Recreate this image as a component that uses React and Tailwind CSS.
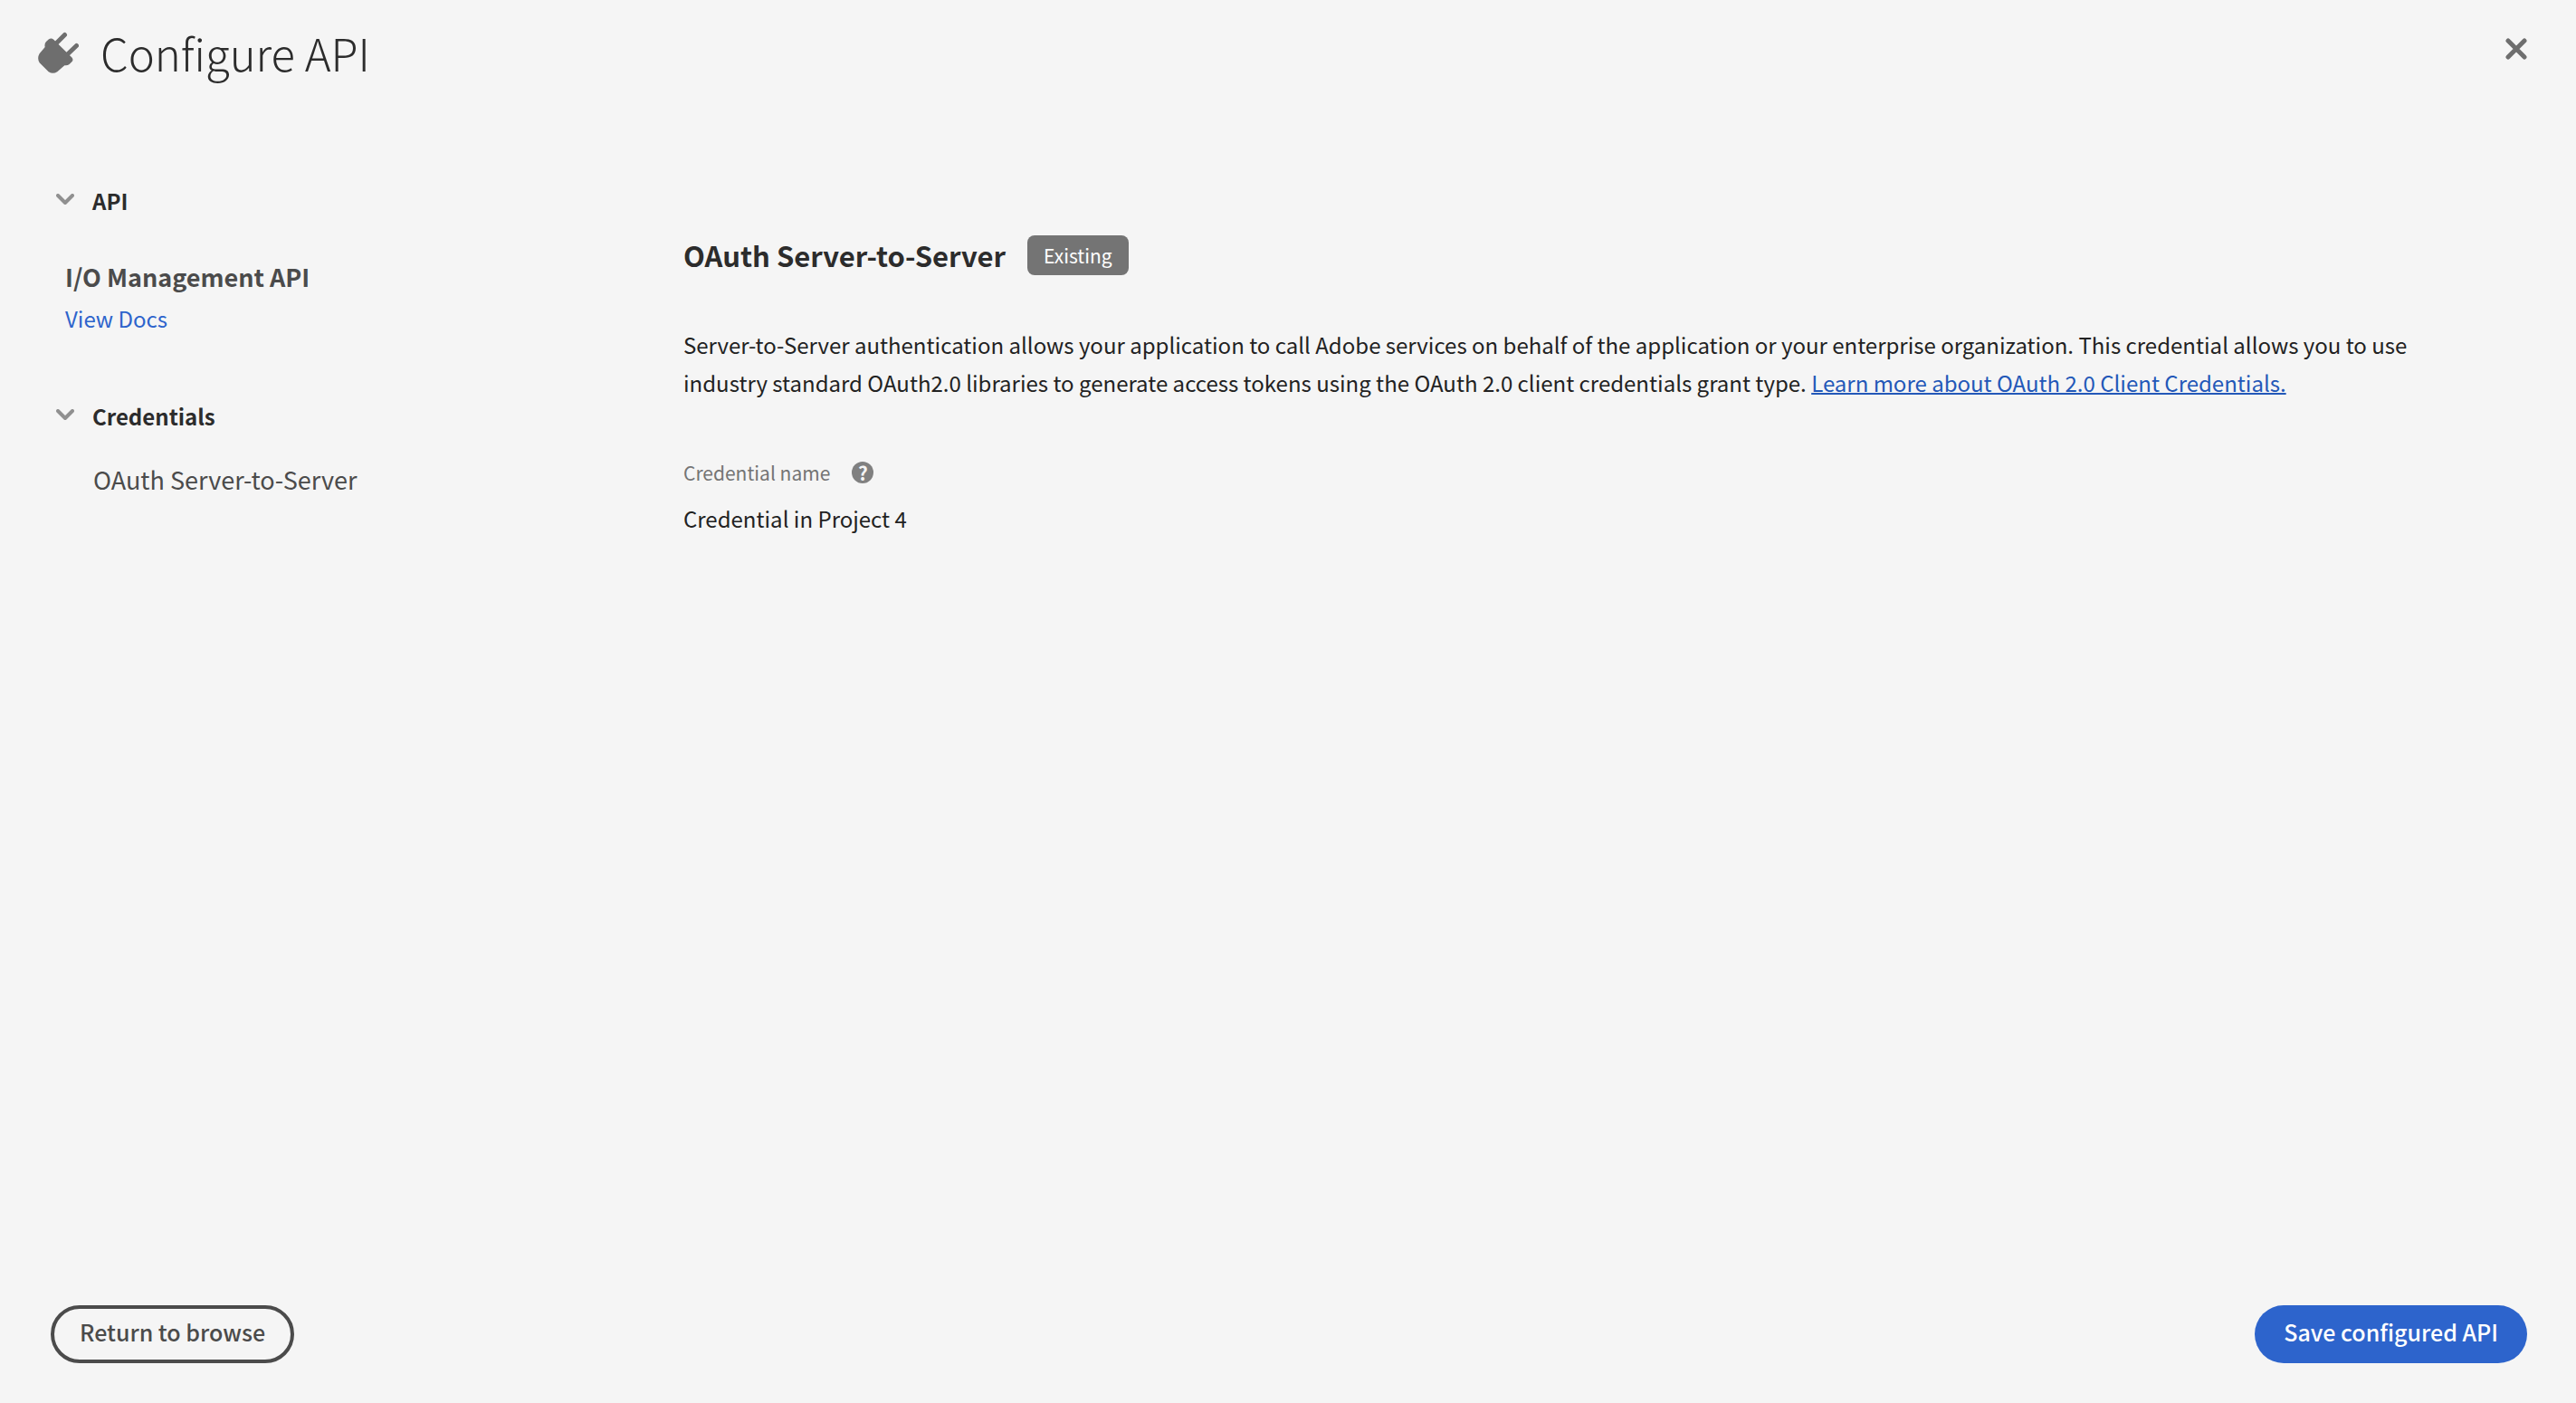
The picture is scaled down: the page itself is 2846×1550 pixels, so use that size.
import React from "react";

function PlugIcon() {
  return (
    <svg viewBox="0 0 46 46" className="size-[46px] shrink-0 text-[#6e6e6e]" fill="currentColor" aria-hidden="true">
      <path d="M21 13 30.500 3.500M32.500 26 43.500 15.500" fill="none" stroke="currentColor" strokeWidth="5" strokeLinecap="round" />
      <path d="M8.700 17Q7.800 13.200 10 11L12.700 8.500Q15.500 6.200 18.300 8.700L38.400 28.400Q40.500 31 38.400 33.300L35.600 36Q33.300 37.800 30.300 37.200L22.300 44.200Q17.400 47.300 12.600 44.200L2.600 34.200Q-.3 29.300 2.600 24.200Z" />
    </svg>
  );
}

function Chevron() {
  return (
    <svg viewBox="0 0 20 16" className="h-4 w-5" fill="none" stroke="#909090" strokeWidth="4" strokeLinecap="round" strokeLinejoin="round" aria-hidden="true">
      <path d="M2 2l8 8 8-8" />
    </svg>
  );
}

function Section({ title, children }) {
  return (
    <section>
      <button type="button" className="flex items-center gap-5 text-[24px] leading-10 font-bold text-[#2c2c2c]">
        <Chevron />
        {title}
      </button>
      {children}
    </section>
  );
}

export default function App() {
  return (
    <div className="flex min-h-screen flex-col bg-[#f5f5f5] font-['Noto_Sans_CJK_SC',sans-serif] text-[24px] text-[#222222]">
      <header className="flex items-start justify-between pt-6 pr-10 pl-[41px]">
        <div className="flex items-center gap-6">
          <PlugIcon />
          <h1 className="text-[49px] leading-[68px] font-light text-[#2c2c2c]">Configure API</h1>
        </div>
        <button type="button" aria-label="Close" className="mt-1 p-[14px]">
          <svg viewBox="0 0 24 24" className="size-6" fill="none" stroke="#6e6e6e" strokeWidth="5" strokeLinecap="round" aria-hidden="true">
            <path d="M3 3l18 18M21 3L3 21" />
          </svg>
        </button>
      </header>

      <div className="flex grow pt-[110px]">
        <nav className="w-[755px] shrink-0 pl-[62px]">
          <Section title="API">
            <div className="mt-[42px] ml-[10px]">
              <h3 className="text-[27px] leading-[44px] font-bold text-[#4b4b4b]">I/O Management API</h3>
              <a href="#docs" className="block leading-[48px] text-[#2d64cc]">View Docs</a>
            </div>
          </Section>
          <div className="mt-16">
            <Section title="Credentials">
              <a href="#oauth" className="mt-7 ml-[41px] block text-[27px] leading-[44px] text-[#4b4b4b]">OAuth Server-to-Server</a>
            </Section>
          </div>
        </nav>

        <main className="min-w-0 grow pt-[58px] pr-[120px]">
          <div className="flex items-center gap-6">
            <h2 className="text-[31px] leading-[44px] font-bold text-[#2c2c2c]">OAuth Server-to-Server</h2>
            <span className="rounded-lg bg-[#747474] px-[18px] text-[21px] leading-[44px] text-white">Existing</span>
          </div>
          <p className="mt-14 leading-[42px]">
            Server-to-Server authentication allows your application to call Adobe services on behalf of the application or your enterprise organization. This credential allows you to use industry standard OAuth2.0 libraries to generate access tokens using the OAuth 2.0 client credentials grant type.{" "}
            <a href="#learn" className="text-[#2358b8] underline decoration-2">Learn more about OAuth 2.0 Client Credentials.</a>
          </p>
          <dl className="mt-[58px]">
            <dt className="flex items-center gap-6 text-[21px] leading-10 text-[#747474]">
              Credential name
              <button type="button" aria-label="About the credential name" className="flex size-6 items-center justify-center rounded-full bg-[#808080] text-[21px] leading-6 font-bold text-[#f5f5f5]">?</button>
            </dt>
            <dd className="mt-[10px] leading-[42px]">Credential in Project 4</dd>
          </dl>
        </main>
      </div>

      <footer className="flex justify-between pr-[54px] pb-11 pl-14 text-[25px] font-medium">
        <button type="button" className="h-16 rounded-full border-4 border-[#4b4b4b] px-7 pb-1 text-[#4b4b4b]">Return to browse</button>
        <button type="button" className="h-16 rounded-full bg-[#2d64cc] px-8 pb-1 text-white">Save configured API</button>
      </footer>
    </div>
  );
}
